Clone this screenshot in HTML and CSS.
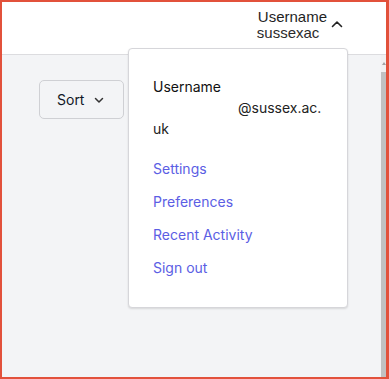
FILE: index.html
```html
<!DOCTYPE html>
<html lang="en">
<head>
<meta charset="utf-8">
<title>Account menu</title>
<link rel="stylesheet" href="styles.css">
</head>
<body>
<div class="frame">
  <header class="topbar">
    <div class="user-toggle">
      <div class="user-lines">
        <span class="user-name">Username</span>
        <span class="user-id">sussexac</span>
      </div>
      <svg class="chev-up" width="12" height="8" viewBox="0 0 12 8" aria-hidden="true">
        <path d="M1.5 6.5 L6 2 L10.5 6.5" fill="none" stroke="#222" stroke-width="1.6" stroke-linecap="round" stroke-linejoin="round"/>
      </svg>
    </div>
  </header>
  <div class="body-area">
    <main class="content">
      <button class="sort-btn" type="button">
        <span>Sort</span>
        <svg width="12" height="8" viewBox="0 0 12 8" aria-hidden="true">
          <path d="M2.5 2.5 L6 6 L9.5 2.5" fill="none" stroke="#333" stroke-width="1.5" stroke-linecap="round" stroke-linejoin="round"/>
        </svg>
      </button>
    </main>
    <div class="scrollbar">
      <div class="scroll-arrow"></div>
      <div class="scroll-thumb"></div>
    </div>
  </div>
  <div class="dropdown">
    <div class="info">
      <div class="info-name">Username</div>
      <div class="info-email">@sussex.ac.<wbr>uk</div>
    </div>
    <nav class="menu">
      <a href="#">Settings</a>
      <a href="#">Preferences</a>
      <a href="#">Recent Activity</a>
      <a href="#">Sign out</a>
    </nav>
  </div>
</div>
</body>
</html>
```
FILE: styles.css
```css
html, body {
  margin: 0;
  padding: 0;
  background: #ffffff;
}

.frame {
  position: relative;
  width: 389px;
  height: 379px;
  box-sizing: border-box;
  border: 2px solid #e2513b;
  border-right-width: 3px;
  display: flex;
  flex-direction: column;
  font-family: Inter, "Liberation Sans", sans-serif;
  color: #111827;
}

.topbar {
  flex: none;
  background: #ffffff;
  border-bottom: 1px solid #dcdcdf;
  display: flex;
  justify-content: flex-end;
  align-items: flex-start;
  padding: 7px 43px 0 0;
  box-sizing: content-box;
  height: 45px;
}

.user-toggle {
  display: flex;
  align-items: flex-start;
  gap: 4px;
}

.user-lines {
  display: flex;
  flex-direction: column;
  font-family: "Liberation Sans", Arial, sans-serif;
  font-size: 15px;
  line-height: 16px;
  color: #1f1f1f;
}

.user-name {
  padding-left: 1px;
}

.user-id {
  color: #2b2b2b;
}

.chev-up {
  margin-top: 11px;
}

.body-area {
  flex: 1;
  display: flex;
  min-height: 0;
}

.content {
  flex: 1;
  background: #f3f4f6;
  padding: 25px 0 0 37px;
}

.sort-btn {
  display: flex;
  align-items: center;
  gap: 9px;
  height: 39px;
  padding: 0 18px 0 17px;
  border: 1px solid #cfd0d4;
  border-radius: 5px;
  background: #f3f4f6;
  font-family: Inter, "Liberation Sans", sans-serif;
  font-size: 14px;
  color: #111827;
}

.scrollbar {
  width: 5px;
  flex: none;
  background: #f1f1f1;
  display: flex;
  flex-direction: column;
}

.scroll-arrow {
  height: 17px;
  flex: none;
  display: flex;
  justify-content: center;
  align-items: center;
}

.scroll-arrow::before {
  content: "";
  width: 0;
  height: 0;
  border-left: 2px solid transparent;
  border-right: 2px solid transparent;
  border-bottom: 3px solid #a3a3a3;
}

.scroll-thumb {
  flex: 1;
  background: #c1c1c1;
}

.dropdown {
  position: absolute;
  left: 126px;
  top: 46px;
  width: 220px;
  box-sizing: border-box;
  padding: 27px 24px 29px 24px;
  background: #ffffff;
  border: 1px solid #d6d6da;
  border-radius: 4px;
  box-shadow: 0 1px 2px rgba(0, 0, 0, 0.12);
}

.info {
  font-size: 14px;
  line-height: 21px;
  color: #111111;
  margin-bottom: 20px;
}

.info-email {
  text-indent: 85px;
  color: #222222;
}

.menu {
  display: flex;
  flex-direction: column;
  gap: 13px;
}

.menu a {
  font-size: 14px;
  line-height: 20px;
  color: #5b5ee4;
  text-decoration: none;
}
```
